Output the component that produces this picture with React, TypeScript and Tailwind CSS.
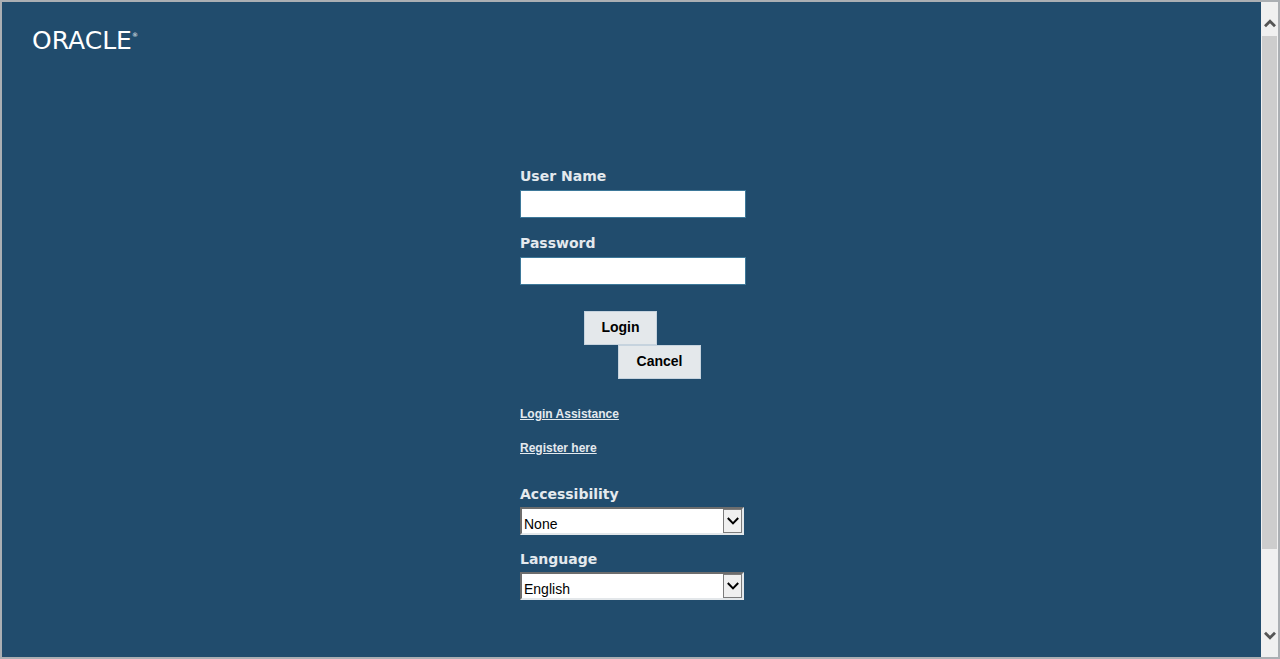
import type { SelectHTMLAttributes, InputHTMLAttributes } from "react";

const labelClass =
  "block h-5 text-sm leading-5 font-bold text-[#e4e9ee] font-['DejaVu_Sans',sans-serif]";

function Logo() {
  return (
    <div className="flex h-6 items-start text-white font-['DejaVu_Sans',sans-serif]">
      <span className="text-[25px] leading-6">ORACLE</span>
      <span className="mt-[2px] text-[6px] leading-2">®</span>
    </div>
  );
}

function Chevron({ up = false }: { up?: boolean }) {
  return (
    <svg
      className="h-[9px] w-3"
      viewBox="0 0 12 9"
      fill="none"
      stroke="#555555"
      strokeWidth="2.8"
      aria-hidden="true"
    >
      <path d={up ? "M1 7.3 6 2.2 11 7.3" : "M1 1.7 6 6.8 11 1.7"} />
    </svg>
  );
}

function Scrollbar() {
  return (
    <div className="flex w-[17px] shrink-0 flex-col bg-[#f0f0f0]">
      <button type="button" aria-label="Scroll up" className="flex h-[34px] items-center justify-center pt-2">
        <Chevron up />
      </button>
      <div className="flex flex-1 flex-col">
        <div className="mr-px ml-px flex-[7] bg-[#cdcdcd]" />
        <div className="flex-1" />
      </div>
      <button type="button" aria-label="Scroll down" className="flex h-[35px] items-center justify-center pb-2">
        <Chevron />
      </button>
    </div>
  );
}

function TextField({
  id,
  label,
  ...props
}: { id: string; label: string } & InputHTMLAttributes<HTMLInputElement>) {
  return (
    <div className="flex flex-col gap-1">
      <label htmlFor={id} className={labelClass}>
        {label}
      </label>
      <input
        id={id}
        className="h-7 w-full border border-[#3d7899] bg-white px-1 text-sm text-black font-['Liberation_Sans',sans-serif]"
        {...props}
      />
    </div>
  );
}

function SelectField({
  id,
  label,
  children,
  ...props
}: { id: string; label: string } & SelectHTMLAttributes<HTMLSelectElement>) {
  return (
    <div className="flex flex-col gap-[3px]">
      <label htmlFor={id} className={labelClass}>
        {label}
      </label>
      <div className="relative w-56">
        <select
          id={id}
          className="block h-7 w-full appearance-none rounded-none border-2 border-t-[#6d6d6d] border-r-[#e3e7ea] border-b-[#e3e7ea] border-l-[#6d6d6d] bg-white pt-[6px] pl-[2px] text-sm leading-[18px] text-black font-['Liberation_Sans',sans-serif]"
          {...props}
        >
          {children}
        </select>
        <span className="pointer-events-none absolute top-[2px] right-[2px] flex h-6 w-[19px] items-center justify-center border border-[#7c7c7c] bg-[#f0f0f0]">
          <svg
            className="h-2 w-3"
            viewBox="0 0 12 8"
            fill="none"
            stroke="#000000"
            strokeWidth="2"
            aria-hidden="true"
          >
            <path d="M0.8 1 6 6.4 11.2 1" />
          </svg>
        </span>
      </div>
    </div>
  );
}

const buttonClass =
  "h-[34px] border border-[#c6d3de] bg-[#e4e8eb] pb-[2px] text-sm font-bold text-black font-['Liberation_Sans',sans-serif]";
const linkClass = "text-xs leading-4 font-bold text-[#e4e9ee] underline";

export default function App() {
  return (
    <div className="flex min-h-screen border-2 border-[#abafb3] bg-[#214c6d] font-['Liberation_Sans',sans-serif]">
      <main className="flex flex-1 flex-col">
        <header className="pt-[27px] pl-[30px]">
          <Logo />
        </header>
        <div className="flex justify-center pt-[113px] pb-10 pl-[3px]">
          <form className="flex w-[226px] flex-col" onSubmit={(e) => e.preventDefault()}>
            <div className="flex flex-col gap-[15px]">
              <TextField id="username" label="User Name" type="text" />
              <TextField id="password" label="Password" type="password" />
            </div>
            <div className="mt-[26px] flex flex-col items-start pl-16">
              <button type="submit" className={`${buttonClass} w-[73px]`}>
                Login
              </button>
              <button type="button" className={`${buttonClass} ml-[34px] w-[83px]`}>
                Cancel
              </button>
            </div>
            <div className="mt-[27px] flex flex-col items-start gap-[18px]">
              <a href="#assistance" className={linkClass}>
                Login Assistance
              </a>
              <a href="#register" className={linkClass}>
                Register here
              </a>
            </div>
            <div className="mt-7 flex flex-col gap-[14px]">
              <SelectField id="accessibility" label="Accessibility" defaultValue="None">
                <option>None</option>
              </SelectField>
              <SelectField id="language" label="Language" defaultValue="English">
                <option>English</option>
              </SelectField>
            </div>
          </form>
        </div>
      </main>
      <Scrollbar />
    </div>
  );
}
